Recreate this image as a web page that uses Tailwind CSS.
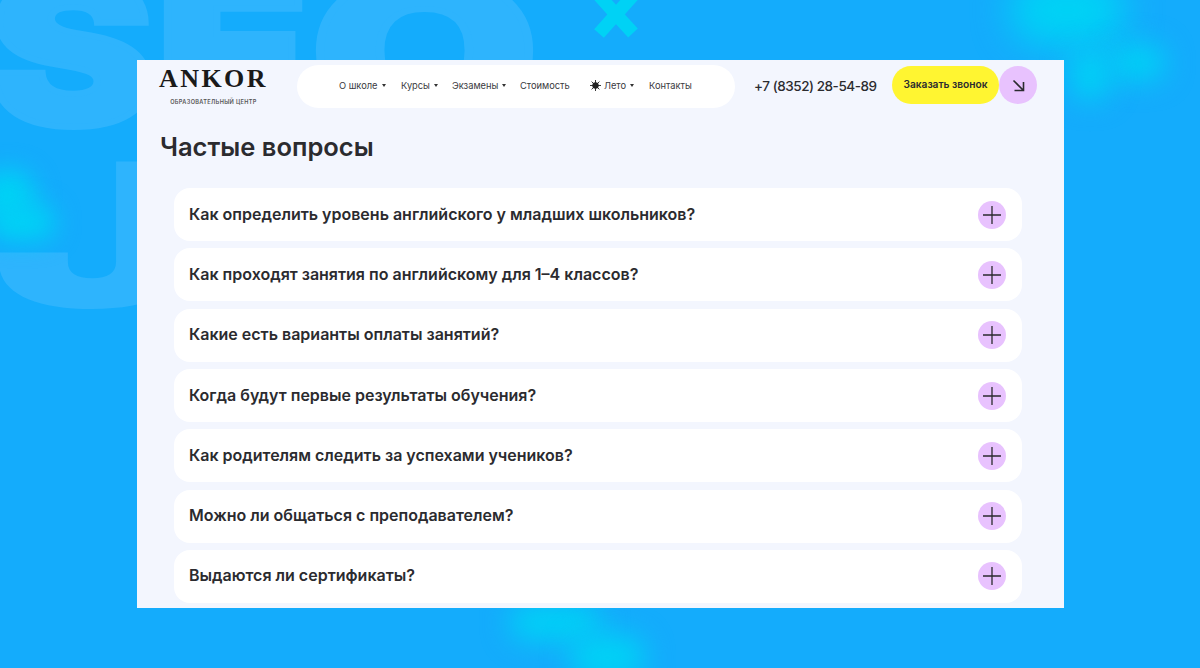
<!DOCTYPE html>
<html lang="ru">
<head>
  <meta charset="UTF-8" />
  <meta name="viewport" content="width=device-width, initial-scale=1.0" />
  <title>Частые вопросы</title>
  <script src="https://cdn.jsdelivr.net/npm/@tailwindcss/browser@4"></script>
</head>
<body class="bg-[#14acfc] font-['Inter',sans-serif] text-[#2b2b2f] h-[668px] overflow-hidden">
  <div class="relative h-[668px] w-[1200px] overflow-hidden">
    <!-- фон: буквы и пятна -->
    <div class="absolute left-[-12px] top-[-50px] origin-top-left scale-x-[1.22] font-black text-[#2eb4fd] text-[205px] leading-[200px] tracking-[1px] [-webkit-text-stroke:6px_#2eb4fd] whitespace-nowrap select-none">SE<span class="inline-block origin-left scale-x-[1.18]">O</span></div>
    <div class="absolute left-[-8px] top-[134px] origin-top-left scale-x-[1.75] font-black text-[#2eb4fd] text-[200px] leading-[200px] select-none">J</div>
    <div class="absolute left-[-20px] top-[170px] w-[55px] h-[50px] rounded-full bg-[#00d2f5] blur-[12px]"></div>
    <div class="absolute left-[-10px] top-[205px] w-[65px] h-[35px] rounded-full bg-[#00d2f5] blur-[12px]"></div>
    <div class="absolute left-[1010px] top-[-25px] w-[115px] h-[70px] rounded-full bg-[#00d2f5] blur-[18px]"></div>
    <div class="absolute left-[1110px] top-[45px] w-[55px] h-[35px] rounded-full bg-[#00d2f5] blur-[14px]"></div>
    <div class="absolute left-[1070px] top-[50px] w-[40px] h-[50px] rounded-full bg-[#00d2f5] blur-[14px]"></div>
    <div class="absolute left-[510px] top-[605px] w-[90px] h-[35px] rounded-full bg-[#00d2f5] blur-[14px]"></div>
    <div class="absolute left-[570px] top-[635px] w-[75px] h-[45px] rounded-full bg-[#00d2f5] blur-[14px]"></div>
    <svg class="absolute left-[590px] top-0" width="52" height="42" viewBox="0 0 52 42"><path d="M9 33.5L26 14.5L43 33M9 -4.5L26 14.5L43 -4.5M26 14.5Z" stroke="#00d2f5" stroke-width="13" fill="none" /></svg>

    <!-- карточка -->
    <div class="absolute left-[137px] top-[60px] w-[927px] h-[548px] bg-[#f3f6fe] overflow-hidden">
      <header class="flex items-start h-[48px] pl-[23px] pt-[5px]">
        <div class="w-[107px] shrink-0 flex flex-col items-center">
          <div class="mt-px font-['Liberation_Serif',serif] font-bold text-[26px] leading-[26px] tracking-[2.4px] text-[#1a1a1a]">ANKOR</div>
          <div class="text-[5.6px] leading-[8px] mt-[6px] font-semibold uppercase tracking-[0.35px] text-[#555]">Образовательный центр</div>
        </div>
        <nav class="ml-[30px] w-[438px] h-[43px] pb-[2px] bg-white rounded-[22px] flex items-center pl-[42px] text-[9.3px] text-[#3a3a3e] whitespace-nowrap">
          <span class="w-[62px] flex items-center gap-[4px]">О школе <i class="border-x-[2px] border-t-[3px] border-x-transparent border-t-[#333]"></i></span>
          <span class="w-[51px] flex items-center gap-[4px]">Курсы <i class="border-x-[2px] border-t-[3px] border-x-transparent border-t-[#333]"></i></span>
          <span class="w-[68px] flex items-center gap-[4px]">Экзамены <i class="border-x-[2px] border-t-[3px] border-x-transparent border-t-[#333]"></i></span>
          <span class="w-[70px]">Стоимость</span>
          <span class="w-[59px] flex items-center gap-[3px]">
            <svg width="11" height="11" viewBox="0 0 11 11"><circle cx="5.5" cy="5.5" r="3.2" fill="#222" /><path d="M5.5 0V11M0 5.5H11M1.6 1.6L9.4 9.4M9.4 1.6L1.6 9.4" stroke="#222" stroke-width="0.9" /></svg>
            Лето <i class="ml-[1px] border-x-[2px] border-t-[3px] border-x-transparent border-t-[#333]"></i>
          </span>
          <span>Контакты</span>
        </nav>
        <div class="ml-[19px] mt-[13px] w-[122px] text-[13.5px] tracking-[-0.45px] leading-[17px] font-medium whitespace-nowrap">+7 (8352) 28-54-89</div>
        <div class="ml-[16px] mt-px flex">
          <div class="w-[107px] h-[38px] rounded-full bg-[#fff531] flex items-center justify-center text-[10.2px] font-semibold whitespace-nowrap">Заказать звонок</div>
          <div class="w-[38px] h-[38px] rounded-full bg-[#e8c2fe] flex items-center justify-center">
            <svg width="13" height="13" viewBox="0 0 13 13" fill="none" stroke="#2b2b2f" stroke-width="1.6"><path d="M1.5 1.5L11 11M11.5 3V11.5H2.5" /></svg>
          </div>
        </div>
      </header>

      <h1 class="ml-[23px] mt-[21px] text-[25.5px] leading-[36px] font-semibold">Частые вопросы</h1>

      <div class="ml-[37px] mt-[23.2px] w-[848px] flex flex-col gap-[7.3px]">
        <div class="h-[53px] shrink-0 bg-white rounded-[16px] flex items-center justify-between pl-[15px] pr-[16px] text-[16px] font-semibold">
          <span class="pb-[2px]">Как определить уровень английского у младших школьников?</span>
          <span class="w-[28px] h-[28px] rounded-full bg-[#e8c2fe] flex items-center justify-center"><svg width="18" height="18" viewBox="0 0 18 18" stroke="#2b2b2f" stroke-width="1.3"><path d="M9 0V18M0 9H18" /></svg></span>
        </div>
        <div class="h-[53px] shrink-0 bg-white rounded-[16px] flex items-center justify-between pl-[15px] pr-[16px] text-[16px] font-semibold">
          <span class="pb-[2px]">Как проходят занятия по английскому для 1–4 классов?</span>
          <span class="w-[28px] h-[28px] rounded-full bg-[#e8c2fe] flex items-center justify-center"><svg width="18" height="18" viewBox="0 0 18 18" stroke="#2b2b2f" stroke-width="1.3"><path d="M9 0V18M0 9H18" /></svg></span>
        </div>
        <div class="h-[53px] shrink-0 bg-white rounded-[16px] flex items-center justify-between pl-[15px] pr-[16px] text-[16px] font-semibold">
          <span class="pb-[2px]">Какие есть варианты оплаты занятий?</span>
          <span class="w-[28px] h-[28px] rounded-full bg-[#e8c2fe] flex items-center justify-center"><svg width="18" height="18" viewBox="0 0 18 18" stroke="#2b2b2f" stroke-width="1.3"><path d="M9 0V18M0 9H18" /></svg></span>
        </div>
        <div class="h-[53px] shrink-0 bg-white rounded-[16px] flex items-center justify-between pl-[15px] pr-[16px] text-[16px] font-semibold">
          <span class="pb-[2px]">Когда будут первые результаты обучения?</span>
          <span class="w-[28px] h-[28px] rounded-full bg-[#e8c2fe] flex items-center justify-center"><svg width="18" height="18" viewBox="0 0 18 18" stroke="#2b2b2f" stroke-width="1.3"><path d="M9 0V18M0 9H18" /></svg></span>
        </div>
        <div class="h-[53px] shrink-0 bg-white rounded-[16px] flex items-center justify-between pl-[15px] pr-[16px] text-[16px] font-semibold">
          <span class="pb-[2px]">Как родителям следить за успехами учеников?</span>
          <span class="w-[28px] h-[28px] rounded-full bg-[#e8c2fe] flex items-center justify-center"><svg width="18" height="18" viewBox="0 0 18 18" stroke="#2b2b2f" stroke-width="1.3"><path d="M9 0V18M0 9H18" /></svg></span>
        </div>
        <div class="h-[53px] shrink-0 bg-white rounded-[16px] flex items-center justify-between pl-[15px] pr-[16px] text-[16px] font-semibold">
          <span class="pb-[2px]">Можно ли общаться с преподавателем?</span>
          <span class="w-[28px] h-[28px] rounded-full bg-[#e8c2fe] flex items-center justify-center"><svg width="18" height="18" viewBox="0 0 18 18" stroke="#2b2b2f" stroke-width="1.3"><path d="M9 0V18M0 9H18" /></svg></span>
        </div>
        <div class="h-[53px] shrink-0 bg-white rounded-[16px] flex items-center justify-between pl-[15px] pr-[16px] text-[16px] font-semibold">
          <span class="pb-[2px]">Выдаются ли сертификаты?</span>
          <span class="w-[28px] h-[28px] rounded-full bg-[#e8c2fe] flex items-center justify-center"><svg width="18" height="18" viewBox="0 0 18 18" stroke="#2b2b2f" stroke-width="1.3"><path d="M9 0V18M0 9H18" /></svg></span>
        </div>
      </div>
    </div>
  </div>
</body>
</html>
